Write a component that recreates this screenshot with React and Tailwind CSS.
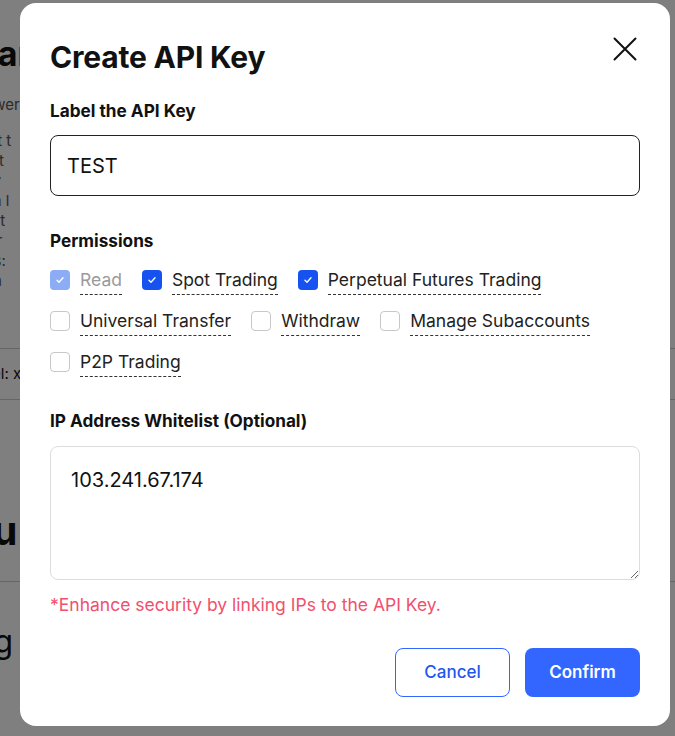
import { useState } from "react";

const perms = [
  [
    { label: "Read", checked: true, disabled: true },
    { label: "Spot Trading", checked: true },
    { label: "Perpetual Futures Trading", checked: true },
  ],
  [
    { label: "Universal Transfer" },
    { label: "Withdraw" },
    { label: "Manage Subaccounts" },
  ],
  [{ label: "P2P Trading" }],
];

const Check = ({ checked, disabled }) => {
  if (!checked) {
    return <span className="w-5 h-5 shrink-0 rounded-[4px] border border-[#c8c8c8] bg-white" />;
  }
  return (
    <span
      className={`w-5 h-5 shrink-0 rounded-[4px] flex items-center justify-center ${
        disabled ? "bg-[#8cacf5]" : "bg-[#1652f0]"
      }`}
    >
      <svg width="12" height="12" viewBox="0 0 12 12" fill="none">
        <path d="M3 6.2l2 2 4-4.4" stroke="white" strokeWidth="1.4" strokeLinecap="round" strokeLinejoin="round" />
      </svg>
    </span>
  );
};

// page behind the dialog, mostly hidden
const Background = () => (
  <div className="-ml-[34px] pt-[34px] text-[#111] whitespace-nowrap">
    <h1 className="text-[34px] font-bold leading-[40px]">Management</h1>
    <p className="mt-[20px] text-[15px] text-[#555]">Answer</p>
    <div className="mt-[14px] text-[15px] leading-[20px] text-[#555]">
      <p>Ment t</p>
      <p>Hun t</p>
      <p>Akey</p>
      <p>Scan l</p>
      <p>Key, t</p>
      <p>ipper</p>
      <p>Days:</p>
      <p>Ent h</p>
      <p>Key</p>
    </div>
    <div className="mt-[37px] border-t border-[#ccc] py-[14px] text-[15px]">Label: x</div>
    <div className="border-t border-[#ccc] h-[110px]" />
    <div className="text-[40px] font-bold leading-[44px]">Bu .</div>
    <div className="mt-[28px] border-t border-[#ccc] pt-[36px] text-[32px]">Ing</div>
    <p className="mt-[10px] text-[15px] text-[#555]">Tra</p>
    <p className="mt-[14px] text-[15px] text-[#555]">/ 20</p>
  </div>
);

export default function App() {
  const [label, setLabel] = useState("TEST");
  const [ip, setIp] = useState("103.241.67.174");

  return (
    <div className="relative h-[736px] overflow-hidden bg-white" style={{ fontFamily: "Inter, 'Noto Sans', sans-serif" }}>
      <Background />
      <div className="absolute inset-0 bg-black/50 pl-5 pt-[3px]">
        <div className="w-[650px] h-[723px] rounded-2xl bg-white px-[30px] pt-[34px] text-[#111]">
          <div className="flex items-start justify-between">
            <h2 className="text-[30px] font-bold leading-[40px] tracking-[-0.2px]">Create API Key</h2>
            <button className="mr-[3px]">
              <svg width="24" height="24" viewBox="0 0 24 24" fill="none" stroke="#111" strokeWidth="2" strokeLinecap="round">
                <path d="M1.5 1.5l21 21M22.5 1.5l-21 21" />
              </svg>
            </button>
          </div>

          <p className="mt-[24px] text-[17.2px] font-bold leading-[20px]">Label the API Key</p>
          <input
            value={label}
            onChange={(e) => setLabel(e.target.value)}
            className="mt-[14px] w-full h-[61px] rounded-lg border border-[#222] px-4 text-[20px] outline-none"
          />

          <p className="mt-[35px] text-[17.2px] font-bold leading-[20px]">Permissions</p>
          <div className="mt-[8px] flex flex-col">
            {perms.map((row, i) => (
              <div key={i} className="flex items-center gap-5 h-[41px]">
                {row.map((p) => (
                  <label key={p.label} className="flex items-center gap-[10px]">
                    <Check checked={p.checked} disabled={p.disabled} />
                    <span
                      className={`text-[17.5px] leading-[22px] border-b border-dashed border-[#333] pb-[3px] mt-[5px] ${
                        p.disabled ? "text-[#9a9a9a]" : "text-[#222]"
                      }`}
                    >
                      {p.label}
                    </span>
                  </label>
                ))}
              </div>
            ))}
          </div>

          <p className="mt-[29px] text-[17.2px] font-bold leading-[20px]">IP Address Whitelist (Optional)</p>
          <textarea
            value={ip}
            onChange={(e) => setIp(e.target.value)}
            className="mt-[15px] block w-full h-[134px] rounded-lg border border-[#dcdcdc] px-5 py-[18px] text-[20px] outline-none"
          />
          <p className="mt-[12px] text-[17.5px] text-[#f0506e]">*Enhance security by linking IPs to the API Key.</p>

          <div className="mt-[30px] flex justify-end gap-[15px]">
            <button className="w-[115px] h-[49px] rounded-lg border border-[#3366ff] text-[#1f55f0] text-[17px] font-medium">
              Cancel
            </button>
            <button className="w-[115px] h-[49px] rounded-lg bg-[#3366ff] text-white text-[17px] font-semibold">
              Confirm
            </button>
          </div>
        </div>
      </div>
    </div>
  );
}
